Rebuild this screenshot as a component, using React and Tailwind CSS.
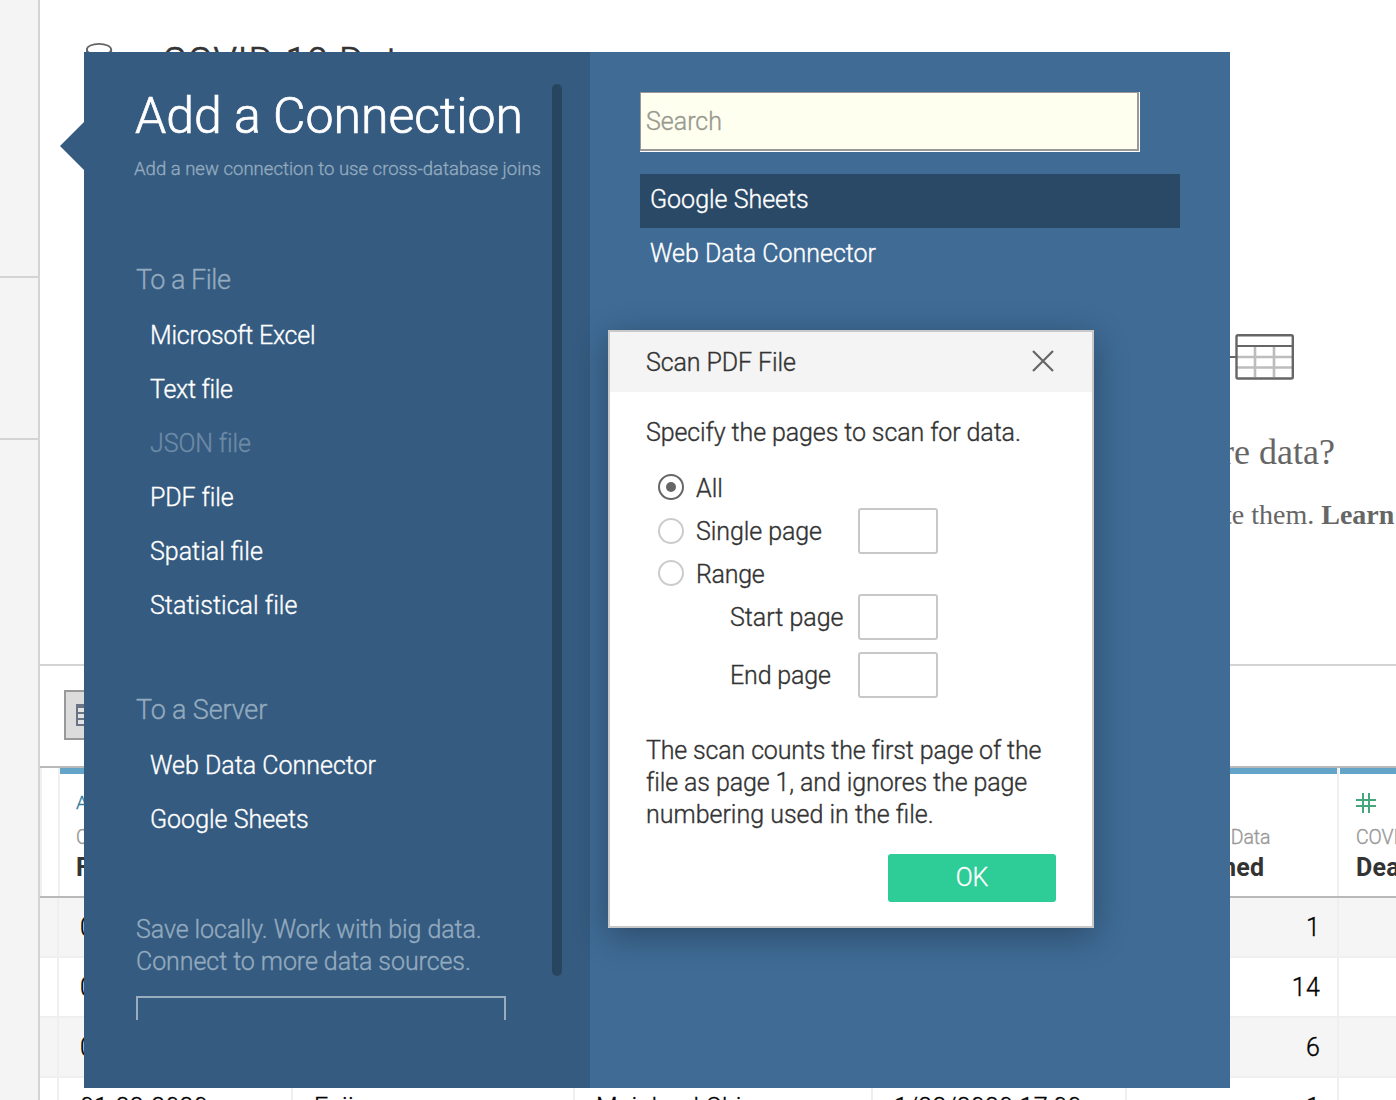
import React from "react";

const TABLE_COLUMNS = [
  { name: "Fips Date", icon: "Abc", width: "w-[234px]" },
  { name: "County", icon: "Abc", width: "w-[282px]" },
  { name: "Province", icon: "Abc", width: "w-[298px]" },
  { name: "Last Update", icon: "Abc", width: "w-[254px]" },
  { name: "Confirmed", icon: "#", width: "w-[212px]" },
  { name: "Deaths", icon: "#", width: "w-[212px]" },
];

const ROWS = [
  ["01-22-2020", "Anhui", "Mainland China", "1/22/2020 17:00", "1", ""],
  ["01-22-2020", "Beijing", "Mainland China", "1/22/2020 17:00", "14", ""],
  ["01-22-2020", "Chongqing", "Mainland China", "1/22/2020 17:00", "6", ""],
  ["01-22-2020", "Fujian", "Mainland China", "1/22/2020 17:00", "1", ""],
];

const FILES = [
  { label: "Microsoft Excel", style: "tracking-[-0.25px]" },
  { label: "Text file", style: "tracking-[-0.3px]" },
  { label: "JSON file", style: "tracking-[-0.1px] text-[#6d8ba6]" },
  { label: "PDF file", style: "tracking-[-0.1px]" },
  { label: "Spatial file", style: "" },
  { label: "Statistical file", style: "tracking-[0.05px]" },
];
const SERVERS = [
  { label: "Web Data Connector", style: "" },
  { label: "Google Sheets", style: "" },
];

function HashIcon() {
  return (
    <svg width="20" height="20" viewBox="0 0 20 20" className="text-[#45a67c]" stroke="currentColor" strokeWidth="2">
      <path d="M7 0v20M13 0v20M0 7h20M0 13h20" />
    </svg>
  );
}

function TableIcon() {
  return (
    <svg width="64" height="46" viewBox="0 0 64 46" fill="none">
      <path d="M7 23h55M7 33.5h55M25 13v30M44 13v30" stroke="#bdbdbd" strokeWidth="2.6" />
      <path d="M0 23h6M6 12h57" stroke="#666" strokeWidth="2.2" />
      <rect x="6.5" y="1.2" width="56.3" height="43.3" rx="1.5" stroke="#666" strokeWidth="2.4" />
    </svg>
  );
}

function DataPane() {
  return (
    <div className="flex h-[664px] flex-col bg-white">
      <div className="flex h-[100px] shrink-0 items-start pl-[46px] pt-[41px]">
        <svg width="28" height="36" viewBox="0 0 28 36" fill="none" stroke="#666" strokeWidth="1.8">
          <ellipse cx="13" cy="8.5" rx="12.2" ry="5.6" />
          <path d="M.8 8v20c0 8 24.4 8 24.4 0V8" />
        </svg>
        <h1 className="ml-12 mt-[3px] text-[38px] leading-[36px] tracking-[0.7px] text-[#333] [-webkit-text-stroke:0.7px]">
          COVID-19 Data
        </h1>
      </div>
      <div className="flex flex-col items-end font-['Liberation_Serif',serif] font-normal text-[#666] [-webkit-text-stroke:0]">
        <div className="mr-[102px] mt-[234px]">
          <TableIcon />
        </div>
        <p className="mr-[61px] mt-[51px] text-[36px] leading-[42px]">Need more data?</p>
        <p className="-mr-[67px] mt-[26px] whitespace-nowrap text-[28px] leading-[32px]">
          Drag tables here to relate them. <b className="font-bold">Learn more</b>
        </p>
      </div>
    </div>
  );
}

function DataGrid() {
  return (
    <div className="flex w-[1513px] flex-col">
      <div className="flex h-[130px] border-b-2 border-[#b9b9b9]">
        <div className="w-5 border-x-2 border-[#f0f0f0]" />
        {TABLE_COLUMNS.map((c) => (
          <div key={c.name} className={`${c.width} shrink-0 pr-px`}>
            <div className="h-full border-r-2 border-[#efefef]">
              <div className="h-1.5 bg-[#63a4c8]" />
              <div className="whitespace-nowrap pl-4">
                <div className="flex h-[58px] items-center text-[19px] text-[#2f7d9c]">
                  {c.icon === "#" ? <HashIcon /> : c.icon}
                </div>
                <div className="-mt-1.5 text-[19.5px] leading-6 tracking-[-0.1px] text-[#999]">COVID-19 Data</div>
                <div className="mt-[3px] text-[25px] font-bold leading-[30px] tracking-[0.2px] text-[#333] [-webkit-text-stroke:0]">
                  {c.name}
                </div>
              </div>
            </div>
          </div>
        ))}
      </div>
      {ROWS.map((row, i) => (
        <div
          key={i}
          className={`flex h-[60px] border-b-2 border-[#efefef] text-[25px] leading-[58px] tracking-[0.25px] text-black ${i % 2 ? "bg-white" : "bg-[#f5f5f5]"}`}
        >
          <div className="w-[19px] border-r-2 border-[#efefef]" />
          {row.map((v, j) => (
            <div
              key={j}
              className={`${TABLE_COLUMNS[j].width} shrink-0 border-r-2 border-[#efefef] pt-px ${j > 3 ? "pr-[17px] text-right" : "pl-[21px]"}`}
            >
              {v}
            </div>
          ))}
        </div>
      ))}
    </div>
  );
}

function Background() {
  return (
    <div className="flex h-[1100px] w-full overflow-hidden">
      <aside className="flex w-10 shrink-0 flex-col border-r-2 border-[#d4d4d4] bg-[#f4f4f4]">
        <div className="h-[278px] border-b-2 border-[#d4d4d4]" />
        <div className="h-[162px] border-b-2 border-[#d4d4d4]" />
      </aside>
      <main className="min-w-0 flex-1 overflow-hidden">
        <DataPane />
        <div className="flex h-[104px] items-start border-y-2 border-b-[#b9b9b9] border-t-[#d4d4d4] pl-6 pt-6">
          <div className="flex h-[50px] w-[50px] items-center justify-center border-2 border-[#999] bg-[#dcdcdc]">
            <svg width="26" height="22" viewBox="0 0 26 22">
              <path fill="#6b7485" d="M0 0h26v22H0z" />
              <path fill="#e2e2e2" d="M2 4h22v4H2zM2 10h22v4H2zM2 16h22v4H2z" />
            </svg>
          </div>
        </div>
        <DataGrid />
      </main>
    </div>
  );
}

function ConnectList({ title, items, titleStyle }) {
  return (
    <section>
      <h3 className={`text-[27px] leading-8 text-[#93aabf] ${titleStyle}`}>{title}</h3>
      <ul className="mt-[13px] pl-3.5 text-[25px] leading-[54px] text-white">
        {items.map((t) => (
          <li key={t.label} className={t.style}>
            {t.label}
          </li>
        ))}
      </ul>
    </section>
  );
}

function ConnectionPanel() {
  return (
    <div className="absolute left-[60px] top-[52px] flex h-[1036px]">
      <svg width="24" height="48" viewBox="0 0 24 48" className="mt-[70px]">
        <path d="M24 0v48L0 24z" fill="#355b80" />
      </svg>
      <div className="flex w-[506px] bg-[#355b80]">
        <div className="h-[968px] w-[468px] overflow-hidden whitespace-nowrap pl-[52px] pt-8">
          <h2 className="-ml-px text-[50px] leading-[64px] text-white [-webkit-text-stroke:0.7px]">Add a Connection</h2>
          <p className="-ml-0.5 mt-[9px] text-[18.5px] leading-6 tracking-[0.02px] text-[#93aabf]">
            Add a new connection to use cross-database joins
          </p>
          <div className="mt-[83px]">
            <ConnectList title="To a File" items={FILES} titleStyle="tracking-[-0.5px]" />
          </div>
          <div className="mt-[61px]">
            <ConnectList title="To a Server" items={SERVERS} titleStyle="tracking-[-0.15px]" />
          </div>
          <p className="mt-[67px] text-[25px] leading-8 tracking-[-0.07px] text-[#93aabf]">
            Save locally. Work with big data.
            <br />
            Connect to more data sources.
          </p>
          <div className="mt-[18px] h-[60px] w-[370px] border-2 border-[#9aadc0]" />
        </div>
        <div className="mt-8 h-[892px] w-2.5 rounded-full bg-[#28455f]" />
      </div>
      <div className="w-[640px] bg-[#3f6b95] pl-[50px] pt-10 text-[25px] text-white">
        <div className="h-[60px] w-[500px] border-b border-r border-white">
          <input
            placeholder="Search"
            className="block h-full w-full border border-b-2 border-r-2 border-[#999] bg-[#fffff0] pl-[5px] outline-none placeholder:text-[#999990]"
          />
        </div>
        <div className="mt-[22px] w-[540px] leading-[52px]">
          <div className="h-[54px] bg-[#2a4966] pl-2.5">Google Sheets</div>
          <div className="h-[54px] pl-2.5">Web Data Connector</div>
        </div>
      </div>
    </div>
  );
}

function Radio({ checked }) {
  return (
    <span
      className={`flex size-[26px] items-center justify-center rounded-full border-2 ${checked ? "border-[#666]" : "border-[#ccc]"}`}
    >
      {checked && <span className="size-2.5 rounded-full bg-[#666]" />}
    </span>
  );
}

function PageInput() {
  return <input className="block h-[46px] w-20 rounded-[3px] border-2 border-[#c8c8c8] bg-white outline-none" />;
}

function ScanDialog() {
  return (
    <div className="absolute left-[608px] top-[330px] h-[598px] w-[486px] border-2 border-[#c8c8c8] bg-white text-[25px] leading-8 text-[#333] shadow-[0_8px_32px_rgba(0,0,0,0.3)]">
      <div className="flex h-[60px] items-center justify-between bg-[#f4f4f4] pl-9 pr-[38px]">
        <span className="pt-0.5 tracking-[-0.1px]">Scan PDF File</span>
        <svg width="22" height="22" viewBox="0 0 22 22" stroke="#666" strokeWidth="2.2" className="-mt-0.5">
          <path d="M1 1l20 20M21 1L1 21" />
        </svg>
      </div>
      <div className="px-9">
        <p className="mt-[25px] tracking-[-0.1px]">Specify the pages to scan for data.</p>
        <div className="mt-5 flex h-9 items-center gap-3 pl-3">
          <Radio checked />
          <span className="pt-[3px]">All</span>
        </div>
        <div className="mt-[3px] grid h-[46px] grid-cols-[38px_162px_80px] items-center pl-3">
          <Radio />
          <span className="pt-0.5 tracking-[-0.08px]">Single page</span>
          <PageInput />
        </div>
        <div className="flex h-10 items-center gap-3 pl-3">
          <span className="-mt-0.5">
            <Radio />
          </span>
          <span className="pt-0.5 tracking-[-0.3px]">Range</span>
        </div>
        <div className="grid grid-cols-[128px_80px] items-center gap-y-3 pl-[84px]">
          <span className="pt-0.5">Start page</span>
          <PageInput />
          <span className="pt-0.5 tracking-[-0.15px]">End page</span>
          <PageInput />
        </div>
        <p className="mt-[37px] whitespace-nowrap">
          <span className="tracking-[-0.15px]">The scan counts the first page of the</span>
          <br />
          <span className="tracking-[-0.1px]">file as page 1, and ignores the page</span>
          <br />
          numbering used in the file.
        </p>
        <button className="ml-auto mt-[23px] block h-12 w-[168px] rounded-[3px] bg-[#2ecc97] text-white">OK</button>
      </div>
    </div>
  );
}

export default function App() {
  return (
    <div className="relative h-[1100px] w-[1396px] overflow-hidden bg-white font-['Roboto',sans-serif] font-light [-webkit-text-stroke:0.35px]">
      <Background />
      <ConnectionPanel />
      <ScanDialog />
    </div>
  );
}
